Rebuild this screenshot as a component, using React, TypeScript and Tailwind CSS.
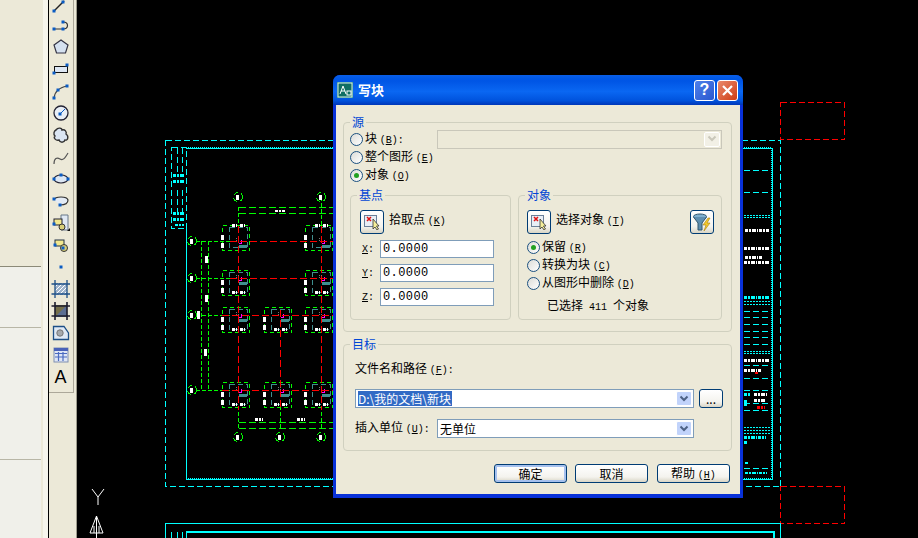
import React from 'react'

const CYAN = '#00ffff'
const GREEN = '#00ff00'
const RED = '#ff0000'
const TEAL = '#3f8f8f'

const cadFont = { fontFamily: '"Noto Sans CJK SC", "Liberation Sans", sans-serif' }
const monoFont = { fontFamily: '"Liberation Mono", monospace' }

// CAD drawing helpers, coordinates are page pixels
const Dash = ({ d, c = CYAN, w = 1, dash = '6 3' }: { d: string; c?: string; w?: number; dash?: string }) => (
    <path d={d} fill="none" stroke={c} strokeWidth={w} strokeDasharray={dash} />
)

// tiny unreadable drawing text: a thick line with an uneven dash looks close enough
const Blob = ({ x, y, w, h, c = '#ffffff' }: { x: number; y: number; w: number; h: number; c?: string }) => (
    <path d={`M${x} ${y + h / 2}h${w}`} stroke={c} strokeWidth={h} strokeDasharray="3 1 2 1 4 1 1 1" fill="none" />
)

const footings = [
    { x: 238, y: 241, top: true },
    { x: 321, y: 241, top: true },
    { x: 238, y: 278, top: false },
    { x: 321, y: 278, top: false },
    { x: 238, y: 315, top: false },
    { x: 280, y: 315, top: false },
    { x: 321, y: 315, top: false },
    { x: 238, y: 390, top: false },
    { x: 280, y: 390, top: false },
    { x: 321, y: 390, top: false },
]

const Footing = ({ x, y, top }: { x: number; y: number; top: boolean }) => {
    const y0 = top ? y - 16 : y - 8
    const whiteY = top ? y - 17 : y + 13
    return (
        <g>
            <Dash d={`M${x - 15.5} ${y0 + 0.5}h27v25h-27z`} c={GREEN} dash="4 3" />
            <Dash d={`M${x - 8.5} ${y0 + 2.5}h18v20h-18z`} c={TEAL} dash="5 3" />
            <Blob x={x - 6} y={whiteY} w={5} h={3} />
            <Blob x={x + 2} y={whiteY} w={5} h={3} />
            <rect x={x - 17} y={y0 + 10} width={3} height={5} fill="#ffffff" />
            <rect x={x - 17} y={y0 + 18} width={3} height={5} fill="#ffffff" />
            <rect x={x + 1} y={y + 4} width={8} height={3} fill={TEAL} />
            <Dash d={`M${x - 2} ${y - 2.5}h4M${x - 2} ${y - 0.5}h4`} c="#777777" dash="1 1" />
            <path d={`M${x + 1} ${y + 2.5}h3M${x + 3.5} ${y - 1}v3`} stroke="#ff00ff" />
        </g>
    )
}

const Bubble = ({ x, y }: { x: number; y: number }) => (
    <g>
        <circle cx={x} cy={y} r={4.5} fill="none" stroke={GREEN} strokeDasharray="5 3" />
        <rect x={x - 2} y={y - 2} width={3} height={5} fill="#ffffff" />
    </g>
)

const CadDrawing = () => (
    <svg className="absolute inset-0 h-full w-full" viewBox="77 0 841 538" shapeRendering="crispEdges">
        {/* sheet frame */}
        <Dash d="M165.5 140.5H780.5V486.5H165.5Z" />
        <path d="M186.5 228V479.5H772.5V148.5H186" fill="none" stroke={CYAN} />
        <Dash d="M186 478.5H772M771.5 148V478M186 147.5H772" dash="1 1" />
        <Dash d="M171.5 147.5h15v81h-15zM177.5 148v28M182.5 148v28M177.5 190v22M182.5 190v22" />
        <Blob x={173} y={174} w={12} h={3} c={CYAN} />
        <Blob x={173} y={180} w={12} h={3} c={CYAN} />
        <Blob x={173} y={212} w={12} h={3} c={CYAN} />
        <Blob x={173} y={218} w={12} h={3} c={CYAN} />
        <Blob x={175} y={224} w={9} h={2} c={CYAN} />

        {/* red paper marks */}
        <Dash d="M780.5 102.5h64v37h-64zM780.5 486.5h64v37h-64z" c={RED} />

        {/* next sheet */}
        <path d="M165.5 538V523.5H780.5V538M171.5 538V532M177.5 538V532M182.5 538V532M186.5 538V532" fill="none" stroke={CYAN} />
        <path d="M186 531.5H773.5V538" fill="none" stroke={CYAN} strokeWidth={2} />

        {/* grid */}
        <Dash d="M238.5 207.5H333M238.5 213.5H333M238.5 422.5H333M238.5 428.5H333" c={GREEN} dash="7 3" />
        <Dash d="M238.5 207V225M238.5 406V428M280.5 406V428M321.5 197V225M321.5 406V428" c={GREEN} dash="4 2" />
        <Dash d="M201.5 241V390M208.5 241V390M196 241.5H230M196 278.5H230M196 315.5H230M196 390.5H230" c={GREEN} dash="4 2" />
        {footings.map((f, i) => (
            <Footing key={i} {...f} />
        ))}
        <Dash d="M230 241.5H333M230 278.5H333M222 315.5H333M222 390.5H333M238.5 226V410M321.5 226V410M280.5 310V410" c={RED} dash="7 3" />
        <Blob x={275} y={210} w={10} h={2} />
        <Blob x={255} y={418} w={8} h={3} />
        <Blob x={297} y={418} w={8} h={3} />
        <rect x={205} y={256} width={3} height={7} fill="#ffffff" />
        <rect x={205} y={295} width={3} height={7} fill="#ffffff" />
        <rect x={204} y={349} width={3} height={7} fill="#ffffff" />
        <Blob x={197} y={311} w={3} h={8} />
        {[[238, 197], [321, 197], [192, 241], [192, 278], [192, 315], [192, 390], [238, 437], [280, 437], [321, 437]].map(([x, y], i) => (
            <Bubble key={i} x={x} y={y} />
        ))}

        {/* title strip right of the dialog */}
        <Dash d="M744 170.5H769M744 192.5H769M744 311.5H769M744 317.5H769M744 324.5H769M744 331.5H769M744 337.5H769M744 344.5H769M744 365.5H769M744 378.5H769M744 390.5H769M744 403.5H769M744 410.5H769M744 468.5H769" />
        <Dash d="M744 215.5H770M744 217.5H770M744 301.5H770M744 304.5H770M744 351.5H770M744 353.5H770M744 427.5H770M744 430.5H770M744 433.5H770" dash="2 1" />
        <Blob x={745} y={229} w={24} h={3} />
        <Blob x={744} y={247} w={26} h={3} />
        <Blob x={745} y={256} w={18} h={3} />
        <Blob x={744} y={261} w={26} h={3} />
        <Blob x={744} y={296} w={25} h={3} c={CYAN} />
        <Blob x={744} y={359} w={25} h={3} />
        <Blob x={744} y={369} w={18} h={3} />
        <rect x={755} y={372} width={3} height={2} fill={RED} />
        <Blob x={744} y={393} w={7} h={3} c={CYAN} />
        <Blob x={744} y={400} w={3} h={6} c={CYAN} />
        <Blob x={754} y={393} w={13} h={3} />
        <Blob x={754} y={399} w={12} h={3} />
        <Blob x={757} y={406} w={8} h={3} c={RED} />
        <Blob x={744} y={436} w={22} h={3} c={CYAN} />
        <Blob x={744} y={441} w={4} h={3} c={CYAN} />
        <Blob x={745} y={462} w={3} h={2} c={CYAN} />
        <Blob x={745} y={472} w={22} h={2} c={CYAN} />
    </svg>
)

// toolbar icons
const Handle = ({ x, y }: { x: number; y: number }) => <rect x={x - 1.5} y={y - 1.5} width={3} height={3} fill="#0a5cc4" />

const toolIcons: React.ReactNode[] = [
    <><path d="M4 19L14 9" stroke="#222" strokeWidth={1.4} /><Handle x={4} y={19} /><Handle x={13} y={10} /></>,
    <><path d="M4 15H13M13 8C19 8 19 15 13 15" fill="none" stroke="#333" strokeWidth={1.2} /><Handle x={4} y={15} /><Handle x={13} y={15} /><Handle x={13} y={8} /></>,
    <path d="M11 4L18 9L15.5 17H6.5L4 9Z" fill="#d5e1f0" stroke="#334" strokeWidth={1.2} />,
    <><rect x="4.5" y="8.5" width="13" height="6" fill="#dde7f4" stroke="#111" /><Handle x={4} y={15} /><Handle x={17} y={7} /></>,
    <><path d="M4 18C5 11 9 8 17 6" fill="none" stroke="#444" strokeWidth={1.2} /><Handle x={4} y={18} /><Handle x={8} y={10} /><Handle x={17} y={6} /></>,
    <><circle cx="11" cy="11" r="7" fill="#e8eef6" stroke="#223" strokeWidth={1.3} /><path d="M11 11L15 7" stroke="#0a5cc4" /><Handle x={10} y={12} /></>,
    <path d="M6 6C8 3 12 4 12 6C15 5 17 8 16 10C19 12 18 17 15 16C14 19 10 19 9 16C6 17 3 14 5 12C3 10 4 7 6 6Z" fill="#dbe6f3" stroke="#333" strokeWidth={1.4} />,
    <path d="M4 18C4 12 7 11 10 13C13 15 15 12 18 7" fill="none" stroke="#555" strokeWidth={1.2} />,
    <><ellipse cx="11" cy="11" rx="7" ry="4" fill="#dbe6f3" stroke="#223" strokeWidth={1.2} /><Handle x={4} y={11} /><Handle x={18} y={11} /><Handle x={11} y={7} /></>,
    <><path d="M4 10C5 6 17 6 18 10C18 14 13 15 10 15" fill="#e3ebf5" stroke="#333" strokeWidth={1.2} /><Handle x={4} y={9} /><Handle x={10} y={15} /></>,
    <><path d="M11 3H18V18H11Z" fill="#dfe8f3" stroke="#678" /><rect x="4" y="7" width="8" height="6" fill="#f2e88e" stroke="#223" /><circle cx="12" cy="15" r="3" fill="#d8cf7a" stroke="#333" /><path d="M17 19L20 19L20 16Z" fill="#111" /><Handle x={4} y={12} /></>,
    <><rect x="5" y="6" width="9" height="6" fill="#f2e88e" stroke="#234" /><circle cx="14" cy="14" r="3.5" fill="#d8cf7a" stroke="#333" /><Handle x={5} y={11} /><Handle x={13} y={14} /></>,
    <Handle x={11} y={11} />,
    <><rect x="5" y="5" width="12" height="12" fill="#9fb4cc" /><path d="M5 9L9 5M5 13L13 5M5 17L17 5M9 17L17 9M13 17L17 13" stroke="#fff" /><path d="M1.5 6H20M1.5 16H20M5 2V20M17 2V20" stroke="#1d4f86" strokeWidth={1.3} /></>,
    <><rect x="5" y="5" width="12" height="12" fill="#746f4a" /><path d="M5 17L17 5V17Z" fill="#5b6e93" /><path d="M1.5 6H20M1.5 16H20M5 2V20M17 2V20" stroke="#1c1c2c" strokeWidth={1.6} /></>,
    <><path d="M3.5 4.5H14L18.5 11V17.5H3.5Z" fill="#dfe9f5" stroke="#1d4f86" strokeWidth={1.3} /><circle cx="10" cy="11" r="3.2" fill="#a5a9ad" stroke="#777" /></>,
    <><rect x="4" y="4" width="14" height="14" fill="#dfe6f5" stroke="#7f8fb0" /><rect x="4" y="4" width="14" height="3" fill="#4a62b8" /><path d="M5 9.5H17M5 13H17M8.5 8V17M13 8V17" stroke="#4a6ac0" strokeWidth={1.2} /></>,
]

const Toolbar = () => (
    <div className="flex h-full w-[25px] shrink-0 flex-col bg-[#ece9d8]">
        <div className="flex h-[393px] flex-col items-center overflow-hidden border-b border-r border-[#aca899] pr-px">
            <div className="-mt-[8px] flex flex-col">
                {toolIcons.map((icon, i) => (
                    <svg key={i} className="block h-[22px] w-[22px]" viewBox="0 0 22 22">
                        {icon}
                    </svg>
                ))}
                <span className="block h-[22px] text-center text-[18px] leading-[22px] text-black" style={{ fontFamily: '"Liberation Sans", sans-serif' }}>
                    A
                </span>
            </div>
        </div>
    </div>
)

const LeftPanel = () => (
    <div className="flex h-full w-[48px] shrink-0 overflow-hidden bg-[#ece9d8]">
        <div className="flex w-[41px] flex-col">
            <div className="h-[267px] border-b border-[#8c8a78]" />
            <div className="h-[61px] border-b border-[#b8b6a6] bg-[#f0f0ea]" />
            <div className="h-[132px] border-b border-[#b8b6a6] bg-[#f0f0ea]" />
            <div className="flex-1 bg-[#f0f0ea]" />
        </div>
        <div className="ml-[2px] w-[5px] bg-[#f6f5ec]" />
    </div>
)

// UCS icon in the corner of the model space
const UcsIcon = () => (
    <svg className="absolute left-[10px] top-[486px] h-[52px] w-[20px]" viewBox="0 0 20 52" fill="none" stroke="#fff">
        <path d="M5 3L11 11L17 3M11 11V19" />
        <path d="M9.5 30L3 47H16ZM9.5 30V52M7 40V47M12 40V47" />
    </svg>
)

// dialog controls
const Label = ({ text, k, tail }: { text: string; k: string; tail?: string }) => (
    <span className="block whitespace-nowrap text-[12px] leading-[14px] text-black">
        {text}{' '}
        <span className="text-[10px]" style={monoFont}>
            (<span className="underline">{k}</span>){tail}
        </span>
    </span>
)

const Radio = ({ on }: { on?: boolean }) => (
    <span className="flex h-[13px] w-[13px] shrink-0 items-center justify-center rounded-full border border-[#1c5180] bg-[linear-gradient(135deg,#dcdcd7,#ffffff)]">
        {on && <span className="h-[5px] w-[5px] rounded-full bg-[#21a121]" />}
    </span>
)

const RadioRow = ({ on, text, k, tail, className }: { on?: boolean; text: string; k: string; tail?: string; className?: string }) => (
    <div className={`flex h-[18px] items-center gap-[2px] ${className ?? ''}`}>
        <Radio on={on} />
        <Label text={text} k={k} tail={tail} />
    </div>
)

// padding goes on an inner div so the legend keeps the same offset in every group
const Group = ({ title, className, pad, children }: { title: string; className: string; pad: string; children: React.ReactNode }) => (
    <fieldset className={`min-w-0 rounded-[4px] border border-[#d0d0bf] ${className}`}>
        <legend className="ml-[6px] px-[2px] text-[12px] leading-[14px] text-[#0046d5]">{title}</legend>
        <div className={pad}>{children}</div>
    </fieldset>
)

const xpButton = 'rounded-[3px] border border-[#003c74] bg-[linear-gradient(180deg,#ffffff,#f4f3ee_70%,#d9d5c5)]'

const PickIcon = () => (
    <svg className="h-[16px] w-[18px]" viewBox="0 0 18 16">
        <rect x="1.5" y="1.5" width="12" height="11" fill="#e8eef6" stroke="#6a7f99" />
        <path d="M4 3L8 7M8 3L4 7" stroke="#e01010" strokeWidth={1.5} />
        <path d="M10 5V15L12 13L14 16L15.5 15L13.5 12H16Z" fill="#f4ee9a" stroke="#333" strokeWidth={0.8} />
    </svg>
)

const FilterIcon = () => (
    <svg className="h-[20px] w-[20px]" viewBox="0 0 20 20">
        <ellipse cx="8" cy="4.5" rx="6.5" ry="2.5" fill="#7fb0cf" stroke="#30566f" />
        <path d="M1.5 5L6 11V18H10V11L14.5 5" fill="#5f8fb0" stroke="#30566f" />
        <path d="M16 6L11 13H14L12 19L18 11H15L18 6Z" fill="#f3c92c" stroke="#a97f10" strokeWidth={0.6} />
    </svg>
)

const IconButton = ({ children }: { children: React.ReactNode }) => (
    <button className={`flex h-[24px] w-[24px] shrink-0 items-center justify-center ${xpButton}`}>{children}</button>
)

const Chevron = ({ disabled }: { disabled?: boolean }) => (
    <span
        className={`flex h-full w-[16px] shrink-0 items-center justify-center rounded-[2px] border border-white ${disabled ? 'bg-[#f2f0e6]' : 'bg-[#c1d3fb]'}`}
    >
        <svg className="h-[8px] w-[10px]" viewBox="0 0 10 8" fill="none">
            <path d="M1.5 1.5L5 5L8.5 1.5" stroke={disabled ? '#c9c7ba' : '#4d6185'} strokeWidth={2} />
        </svg>
    </span>
)

const Combo = ({ className, children }: { className: string; children?: React.ReactNode }) => (
    <div className={`flex h-[19px] shrink-0 items-center border border-[#7f9db9] bg-white p-px ${className}`}>
        <div className="min-w-0 flex-1 pl-px text-[12px] leading-[15px] text-black">{children}</div>
        <Chevron />
    </div>
)

const CoordRow = ({ axis }: { axis: string }) => (
    <div className="flex h-[18px] items-center">
        <span className="w-[20px] pl-[2px] text-[10px] text-black" style={monoFont}>
            <span className="underline">{axis}</span>:
        </span>
        <div className="h-[18px] w-[114px] border border-[#7f9db9] bg-white pl-[2px] text-[12px] leading-[16px] tracking-[0.4px] text-black" style={monoFont}>
            0.0000
        </div>
    </div>
)

const Dialog = () => (
    <div className="absolute left-[256px] top-[75px] flex h-[423px] w-[410px] flex-col rounded-t-[7px] bg-[#0831d9]" style={cadFont}>
        {/* title bar */}
        <div className="flex h-[30px] shrink-0 items-center rounded-t-[7px] bg-[linear-gradient(180deg,#0a5fe8,#0058e6_12%,#0055e5_20%,#0a67f2_55%,#0053dd_85%,#0037b8)] pl-[4px] pr-[5px]">
            <svg className="h-[16px] w-[16px] shrink-0" viewBox="0 0 16 16">
                <rect width="16" height="16" fill="#1f8f80" />
                <rect x="1" y="1" width="14" height="14" fill="#0f6f64" stroke="#dfeeea" />
                <path d="M3 12L6 4L9 12M4 9H8" fill="none" stroke="#fff" />
                <rect x="10" y="9" width="4" height="4" fill="none" stroke="#fff" />
            </svg>
            <span className="ml-[5px] flex-1 text-[13px] font-bold leading-[16px] text-white">写块</span>
            <button className="flex h-[21px] w-[21px] items-center justify-center rounded-[3px] border border-white bg-[linear-gradient(135deg,#4f80ea,#2a58cf)] text-[16px] font-bold leading-none text-white" style={{ fontFamily: '"Liberation Sans", sans-serif' }}>
                ?
            </button>
            <button className="ml-[2px] flex h-[21px] w-[21px] items-center justify-center rounded-[3px] border border-white bg-[linear-gradient(135deg,#e98a6c,#cf3c14)]">
                <svg className="h-[13px] w-[13px]" viewBox="0 0 13 13">
                    <path d="M2 2L11 11M11 2L2 11" stroke="#fff" strokeWidth={2.2} />
                </svg>
            </button>
        </div>

        {/* client area */}
        <div className="mx-[3px] mb-[4px] flex flex-1 flex-col bg-[#ece9d8] px-[7px] pt-[10px]">
            <Group title="源" className="h-[217px] w-[389px]" pad="px-[6px]">
                <div className="mt-px flex h-[18px] items-center">
                    <RadioRow text="块" k="B" tail=":" className="w-[87px]" />
                    <div className="flex h-[19px] w-[285px] items-center justify-end border border-[#c9c7ba] bg-[#ece9d8] p-px">
                        <Chevron disabled />
                    </div>
                </div>
                <RadioRow text="整个图形" k="E" />
                <RadioRow on text="对象" k="O" />

                <div className="mt-[4px] flex gap-[7px]">
                    <Group title="基点" className="h-[132px] w-[161px]" pad="px-[9px]">
                        <div className="mt-[8px] flex items-start gap-[5px]">
                            <IconButton>
                                <PickIcon />
                            </IconButton>
                            <div className="mt-[2px]">
                                <Label text="拾取点" k="K" />
                            </div>
                        </div>
                        <div className="mt-[6px] flex flex-col gap-[6px]">
                            <CoordRow axis="X" />
                            <CoordRow axis="Y" />
                            <CoordRow axis="Z" />
                        </div>
                    </Group>
                    <Group title="对象" className="h-[132px] w-[204px]" pad="px-[8px]">
                        <div className="mt-[8px] flex items-start">
                            <IconButton>
                                <PickIcon />
                            </IconButton>
                            <div className="ml-[5px] mt-[2px] flex-1">
                                <Label text="选择对象" k="T" />
                            </div>
                            <div className="mr-[-1px]">
                                <IconButton>
                                    <FilterIcon />
                                </IconButton>
                            </div>
                        </div>
                        <div className="mt-[4px] flex flex-col">
                            <RadioRow on text="保留" k="R" />
                            <RadioRow text="转换为块" k="C" />
                            <RadioRow text="从图形中删除" k="D" />
                        </div>
                        <div className="mt-[6px] whitespace-pre pl-[20px] text-[12px] leading-[14px] text-black">
                            已选择
                            <span className="px-[6px] text-[10px]" style={monoFont}>411</span>
                            个对象
                        </div>
                    </Group>
                </div>
            </Group>

            <Group title="目标" className="mt-[5px] h-[114px] w-[389px]" pad="pl-[11px]">
                <div className="mt-[10px]">
                    <Label text="文件名和路径" k="F" tail=":" />
                </div>
                <div className="mt-[11px] flex items-center gap-[5px]">
                    <Combo className="w-[339px]">
                        <span className="block w-fit bg-[#316ac5] pr-px leading-[15px] text-white">D:\我的文档\新块</span>
                    </Combo>
                    <button className={`h-[19px] w-[24px] shrink-0 text-[12px] leading-[14px] text-black ${xpButton}`}>...</button>
                </div>
                <div className="mt-[11px] flex items-center">
                    <div className="w-[82px]">
                        <Label text="插入单位" k="U" tail=":" />
                    </div>
                    <Combo className="w-[257px]">无单位</Combo>
                </div>
            </Group>

            {/* buttons */}
            <div className="mt-[13px] flex justify-end gap-[8px] pr-[3px]">
                <button className={`h-[19px] w-[73px] text-[12px] leading-[15px] text-black shadow-[inset_0_0_0_2px_#a6c1ee] ${xpButton}`}>确定</button>
                <button className={`h-[19px] w-[73px] text-[12px] leading-[15px] text-black ${xpButton}`}>取消</button>
                <button className={`ml-px h-[19px] w-[73px] text-[12px] leading-[15px] text-black ${xpButton}`}>
                    帮助{' '}
                    <span className="text-[10px]" style={monoFont}>
                        (<span className="underline">H</span>)
                    </span>
                </button>
            </div>
        </div>
    </div>
)

export default function App() {
    return (
        <div className="flex h-[538px] w-[918px] overflow-hidden bg-black" style={cadFont}>
            <LeftPanel />
            <div className="w-px shrink-0 bg-black" />
            <Toolbar />
            <div className="flex w-[3px] shrink-0">
                <div className="w-[2px] bg-[#ece9d8]" />
                <div className="w-px bg-[#9d9b8c]" />
            </div>
            <div className="relative flex-1">
                <CadDrawing />
                <UcsIcon />
                <Dialog />
            </div>
        </div>
    )
}
